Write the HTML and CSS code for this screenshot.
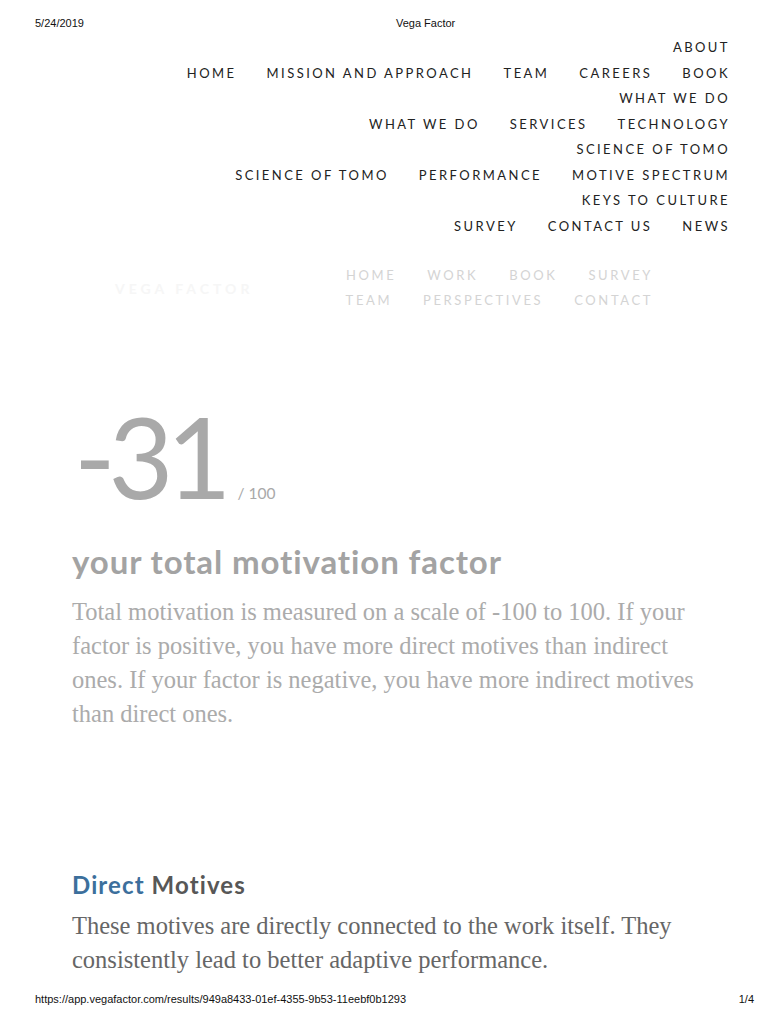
FILE: index.html
```html
<!DOCTYPE html>
<html lang="en">
<head>
<meta charset="utf-8">
<title>Vega Factor</title>
<link rel="stylesheet" href="styles.css">
</head>
<body>
<div class="page">
  <header class="print-header">
    <span class="print-date">5/24/2019</span>
    <span class="print-title">Vega Factor</span>
  </header>

  <nav class="main-nav">
    <div class="nav-row"><a>ABOUT</a></div>
    <div class="nav-row"><a>HOME</a><a>MISSION AND APPROACH</a><a>TEAM</a><a>CAREERS</a><a>BOOK</a></div>
    <div class="nav-row"><a>WHAT WE DO</a></div>
    <div class="nav-row"><a>WHAT WE DO</a><a>SERVICES</a><a>TECHNOLOGY</a></div>
    <div class="nav-row"><a>SCIENCE OF TOMO</a></div>
    <div class="nav-row"><a>SCIENCE OF TOMO</a><a>PERFORMANCE</a><a>MOTIVE SPECTRUM</a></div>
    <div class="nav-row"><a>KEYS TO CULTURE</a></div>
    <div class="nav-row"><a>SURVEY</a><a>CONTACT US</a><a>NEWS</a></div>
  </nav>

  <div class="site-bar">
    <div class="site-logo">VEGA FACTOR</div>
    <nav class="site-nav">
      <div class="site-row"><a>HOME</a><a>WORK</a><a>BOOK</a><a>SURVEY</a></div>
      <div class="site-row"><a>TEAM</a><a>PERSPECTIVES</a><a>CONTACT</a></div>
    </nav>
  </div>

  <main class="content">
    <div class="score">
      <span class="score-value">-31</span><span class="score-max">/ 100</span>
    </div>
    <h1 class="score-title">your total motivation factor</h1>
    <p class="lead">Total motivation is measured on a scale of -100 to 100. If your factor is positive, you have more direct motives than indirect ones. If your factor is negative, you have more indirect motives than direct ones.</p>

    <h2 class="section-title"><span class="accent">Direct</span> Motives</h2>
    <p class="body-text">These motives are directly connected to the work itself. They consistently lead to better adaptive performance.</p>
  </main>

  <footer class="print-footer">
    <span>https://app.vegafactor.com/results/949a8433-01ef-4355-9b53-11eebf0b1293</span>
    <span>1/4</span>
  </footer>
</div>
</body>
</html>
```

FILE: styles.css
```css
html, body {
  margin: 0;
  padding: 0;
  background: #ffffff;
}

.page {
  width: 768px;
  height: 1024px;
  display: flex;
  flex-direction: column;
  font-family: "Lato", "Liberation Sans", sans-serif;
}

.print-header {
  display: flex;
  align-items: flex-start;
  padding: 16px 35px 0;
  height: 35px;
  box-sizing: border-box;
  font-family: "Liberation Sans", Arial, sans-serif;
  font-size: 11px;
  line-height: 14px;
  color: #111;
}

.print-title {
  margin-left: 312px;
}

.main-nav {
  display: flex;
  flex-direction: column;
  padding-right: 38px;
}

.nav-row {
  display: flex;
  justify-content: flex-end;
  gap: 30px;
  line-height: 25.5px;
  font-size: 13px;
  letter-spacing: 2.45px;
  color: #222;
}

.site-bar {
  margin-top: 24px;
  display: flex;
  justify-content: space-between;
  align-items: center;
  padding: 0 115px;
}

.site-logo {
  font-size: 14px;
  letter-spacing: 4px;
  font-weight: 700;
  color: #f6f6f6;
}

.site-nav {
  display: flex;
  flex-direction: column;
}

.site-row {
  display: flex;
  justify-content: flex-end;
  gap: 31px;
  line-height: 25px;
  font-size: 13px;
  letter-spacing: 2.6px;
  color: #d4d4d4;
}

.content {
  padding: 0 72px;
}

.score {
  margin-top: 87px;
  display: flex;
  align-items: baseline;
  color: #a9a9a9;
}

.score-value {
  font-size: 112px;
  font-weight: 400;
  line-height: 112px;
  letter-spacing: -7px;
  margin-left: 2px;
}

.score-max {
  font-size: 15.5px;
  margin-left: 13px;
}

.score-title {
  margin: 31px 0 0;
  font-size: 33px;
  font-weight: 700;
  letter-spacing: 0.9px;
  color: #a3a3a3;
  line-height: 36px;
}

.lead {
  margin: 16px 0 0;
  width: 630px;
  font-family: "Liberation Serif", "Times New Roman", serif;
  font-size: 24.5px;
  line-height: 34px;
  color: #ababab;
}

.section-title {
  margin: 139px 0 0;
  font-size: 24px;
  font-weight: 700;
  letter-spacing: 1.1px;
  color: #575757;
  line-height: 30px;
}

.accent {
  color: #3c6f9c;
}

.body-text {
  margin: 9px 0 0;
  width: 630px;
  font-family: "Liberation Serif", "Times New Roman", serif;
  font-size: 24.5px;
  line-height: 34px;
  color: #666666;
}

.print-footer {
  margin-top: auto;
  height: 34px;
  display: flex;
  justify-content: space-between;
  padding: 0 14px 0 35px;
  font-family: "Liberation Sans", Arial, sans-serif;
  font-size: 11px;
  color: #111;
  line-height: 18px;
}
```
